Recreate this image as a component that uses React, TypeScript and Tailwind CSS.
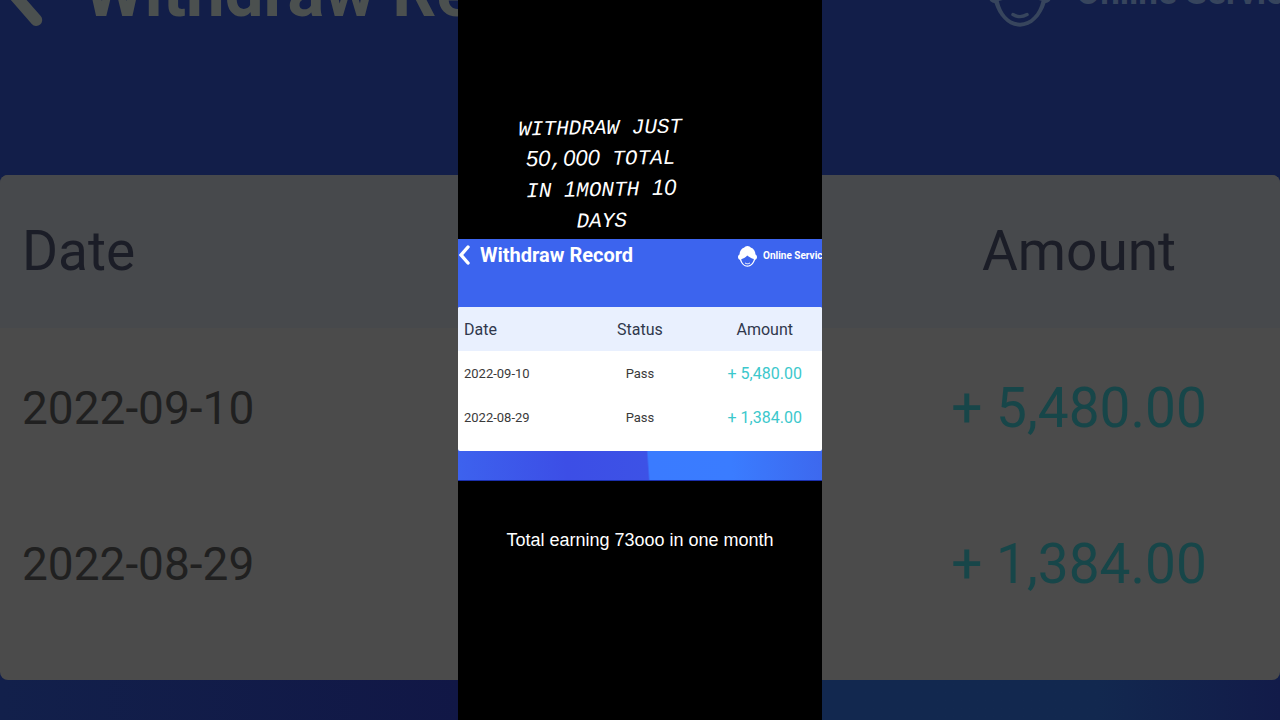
import type { ReactNode } from "react";

const records = [
  { date: "2022-09-10", status: "Pass", amount: "+ 5,480.00" },
  { date: "2022-08-29", status: "Pass", amount: "+ 1,384.00" },
];

function BackIcon({ className }: { className: string }) {
  return (
    <svg viewBox="0 0 11 20" fill="none" className={className} aria-hidden="true">
      <path d="M9 2 2 10 9 18" stroke="currentColor" strokeWidth="3.4" strokeLinecap="round" strokeLinejoin="miter" />
    </svg>
  );
}

function ServiceIcon({ className }: { className: string }) {
  return (
    <svg viewBox="0 0 19 21" fill="none" className={className} aria-hidden="true">
      <path
        d="M9.500 0C7.800.1 6.900 1 6.300 1.600 3.200 2.600 1.600 5.300 1.500 8.600.6 9 0 9.900 0 11.100c0 1.500.7 2.500 1.900 2.700C3.200 17.800 6 20.800 9.500 20.800s6.300-3 7.600-7c1.200-.2 1.900-1.200 1.900-2.700 0-1.200-.6-2.100-1.500-2.500-.1-3.300-1.700-6-4.800-7C12.100 1 11.200.1 9.500 0Z"
        fill="currentColor"
      />
      <path
        d="M3.200 13.200c2.600-.6 4.600-1.800 6-3.600 1.700 1.500 4.200 2.900 6.700 3.500-.9 3.900-3.300 6.500-6.400 6.500s-5.400-2.500-6.300-6.400Z"
        className="fill-[var(--header)]"
      />
      <path d="M7.400 17.200c1.400.8 2.800.8 4.200 0" stroke="currentColor" strokeWidth="1" strokeLinecap="round" />
    </svg>
  );
}

// Plain digits, the mono face dots its zeros
function Digits({ children }: { children: ReactNode }) {
  return <span className="font-['Liberation_Sans'] text-[22px] leading-none">{children}</span>;
}

function LeftBackdrop() {
  return (
    <aside className="flex min-w-0 flex-1 flex-col overflow-hidden bg-[#121e49] font-[Roboto,sans-serif]">
      <div className="h-[175px] overflow-hidden">
        <div className="-mt-12 flex h-20 items-center gap-10 pl-1 text-[#4b504f]">
          <BackIcon className="h-[70px] w-10 shrink-0" />
          <p className="text-[69px] leading-none font-bold whitespace-nowrap">Withdraw Record</p>
        </div>
      </div>
      <div className="overflow-hidden rounded-l-lg bg-[#4b4b4b] pb-10">
        <table className="w-full text-left">
          <thead>
            <tr className="h-[153px] bg-[#47494c]">
              <th className="pl-[22px] text-[55px] leading-none font-normal text-[#1b1d27]">Date</th>
            </tr>
          </thead>
          <tbody>
            {records.map((record) => (
              <tr key={record.date} className="h-[156px]">
                <td className="pt-1 pl-[22px] text-[46px] leading-none text-[#202020]">{record.date}</td>
              </tr>
            ))}
          </tbody>
        </table>
      </div>
      <div className="flex-1 bg-linear-to-r from-[#12204b] to-[#111746]" />
    </aside>
  );
}

function RightBackdrop() {
  return (
    <aside className="flex min-w-0 flex-1 flex-col overflow-hidden bg-[#121e49] font-[Roboto,sans-serif]">
      <div className="h-[175px] overflow-hidden">
        <div className="-mt-12 flex h-20 items-center gap-6 pl-[166px] text-[#37455d] [--header:#121e49]">
          <ServiceIcon className="h-[74px] w-16 shrink-0" />
          <p className="text-[35px] leading-none font-bold whitespace-nowrap">Online Service</p>
        </div>
      </div>
      <div className="overflow-hidden rounded-r-lg bg-[#4b4b4b] pb-10">
        <table className="w-full text-center">
          <thead>
            <tr className="h-[153px] bg-[#47494c]">
              <th className="pl-14 text-[55px] leading-none font-normal text-[#1b1d27]">Amount</th>
            </tr>
          </thead>
          <tbody>
            {records.map((record) => (
              <tr key={record.date} className="h-[156px]">
                <td className="pt-1 pl-14 text-[55px] leading-none text-[#174649]">{record.amount}</td>
              </tr>
            ))}
          </tbody>
        </table>
      </div>
      <div className="flex-1 bg-linear-to-r from-[#12284f] from-60% to-[#121b49]" />
    </aside>
  );
}

function RecordCard() {
  return (
    <section className="bg-[#3c64ee] font-[Roboto,sans-serif] [--header:#3c64ee]">
      <header className="flex h-[68px] items-start justify-between overflow-hidden pt-1 text-white">
        <div className="flex h-6 items-center gap-2.5 pl-px">
          <button type="button" aria-label="Back">
            <BackIcon className="h-5 w-[11px]" />
          </button>
          <h1 className="text-[20px] leading-6 font-bold whitespace-nowrap">Withdraw Record</h1>
        </div>
        <a href="#service" className="flex h-[26px] w-[84px] items-center gap-1.5 overflow-hidden">
          <ServiceIcon className="h-[21px] w-[19px] shrink-0" />
          <span className="text-[10px] leading-6 font-bold whitespace-nowrap">Online Service</span>
        </a>
      </header>
      <div className="overflow-hidden rounded-xs bg-white pb-3">
        <table className="w-full table-fixed text-center">
          <thead>
            <tr className="h-11 bg-[#e9f0fe] text-base text-[#30384c]">
              <th className="w-[32%] pt-0.5 pl-1.5 text-left font-normal">Date</th>
              <th className="w-[36%] pt-0.5 font-normal">Status</th>
              <th className="w-[32%] pt-0.5 pl-0.5 font-normal">Amount</th>
            </tr>
          </thead>
          <tbody>
            {records.map((record) => (
              <tr key={record.date} className="h-11 text-[13px] text-[#3a3a3a]">
                <td className="pt-0.5 pl-1.5 text-left">{record.date}</td>
                <td className="pt-0.5">{record.status}</td>
                <td className="pt-0.5 pl-0.5 text-base text-[#3cc8cc]">{record.amount}</td>
              </tr>
            ))}
          </tbody>
        </table>
      </div>
      <div className="h-[30px] border-b border-[#1a2fae] bg-[linear-gradient(86deg,#3d62ee_0%,#3c4ee6_30%,#3d52e6_52%,#3a7bff_52.5%,#3a7cff_75%,#3d68ee_100%)]" />
    </section>
  );
}

export default function App() {
  return (
    <div className="flex min-h-screen bg-black">
      <LeftBackdrop />
      <main className="w-[364px] shrink-0 bg-black text-white">
        <div className="flex h-[239px] items-end pr-[78px] pb-0.5">
          <p className="w-full -rotate-1 text-center font-['Liberation_Mono',monospace] text-[21px] leading-[31px] italic">
            WITHDRAW JUST
            <br />
            <Digits>50</Digits>,<Digits>000</Digits> TOTAL
            <br />
            IN <Digits>1</Digits>MONTH <Digits>10</Digits>
            <br />
            DAYS
          </p>
        </div>
        <RecordCard />
        <p className="pt-[47px] text-center font-['Liberation_Sans',sans-serif] text-[18px] leading-6">
          Total earning 73ooo in one month
        </p>
      </main>
      <RightBackdrop />
    </div>
  );
}
